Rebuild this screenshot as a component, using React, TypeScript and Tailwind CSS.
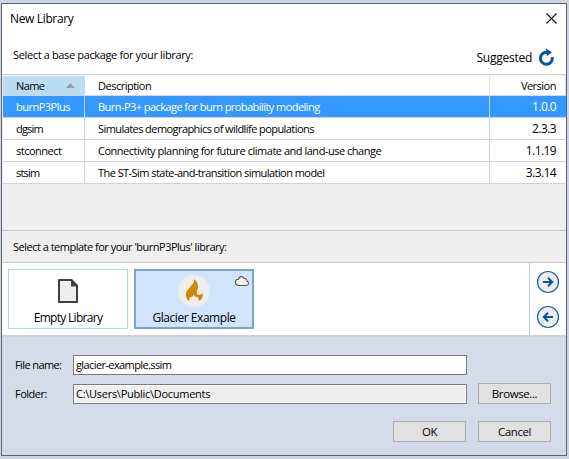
import type { ReactNode } from "react";

const packages = [
  { name: "burnP3Plus", nameCls: "tracking-[-0.5px]", description: "Burn-P3+ package for burn probability modeling", descCls: "tracking-[-0.55px]", version: "1.0.0", selected: true },
  { name: "dgsim", nameCls: "tracking-[-0.8px]", description: "Simulates demographics of wildlife populations", descCls: "tracking-[-0.57px]", version: "2.3.3" },
  { name: "stconnect", nameCls: "tracking-[-0.5px]", description: "Connectivity planning for future climate and land-use change", descCls: "tracking-[-0.48px]", version: "1.1.19" },
  { name: "stsim", nameCls: "tracking-[-0.8px]", description: "The ST-Sim state-and-transition simulation model", descCls: "tracking-[-0.55px]", version: "3.3.14" },
];

function DialogButton({ children }: { children: ReactNode }) {
  return (
    <button className="flex h-[21px] w-[73px] shrink-0 items-center justify-center border border-[#adadad] bg-[#e1e1e1] text-[11.5px] tracking-[-0.4px]">
      {children}
    </button>
  );
}

function ArrowButton({ back = false }: { back?: boolean }) {
  return (
    <svg width="24" height="24" viewBox="0 0 24 24" fill="none" className="shrink-0">
      <circle cx="12" cy="12" r="10.5" fill="#ededf0" stroke="#185ba2" strokeWidth="1.2" />
      <path
        d={back ? "M17 12H8M12 7.8 7.8 12 12 16.2" : "M7 12h9M12 7.8 16.2 12 12 16.2"}
        stroke="#0c529c"
        strokeWidth="2"
      />
    </svg>
  );
}

export default function App() {
  return (
    <div className="h-[459px] w-[569px] bg-[#cdd5e5] pt-[3px] pl-px font-['Open_Sans','Noto_Sans',sans-serif] text-[11px] leading-4 text-black">
      <div className="flex h-[453px] w-[566px] flex-col border border-[#5c6370] bg-white">
        <div className="flex h-[30px] items-start justify-between pt-[7px] pr-[9px] pl-[8px]">
          <span className="text-[12px] tracking-[-0.35px]">New Library</span>
          <svg width="11" height="11" viewBox="0 0 11 11" className="mt-[2px]" stroke="#111" strokeWidth="1.1">
            <path d="M.5.5l10 10M10.5.5l-10 10" />
          </svg>
        </div>
        <div className="flex h-[40px] items-start justify-between pr-[11px] pl-[11px]">
          <span className="mt-[13px] tracking-[-0.36px]">Select a base package for your library:</span>
          <div className="mt-[14px] flex items-center gap-[6px]">
            <span className="text-[12px] tracking-[-0.25px]">Suggested</span>
            <svg width="17" height="19" viewBox="0 0 17 19" fill="none">
              <path d="M9 4.3A6 6 0 1 0 14.200 9" stroke="#09569f" strokeWidth="3" />
              <path d="M8 .5l6 3.800-5.200 4z" fill="#09569f" />
            </svg>
          </div>
        </div>
        <div className="h-[2px] shrink-0 border-t border-[#d0d0d0] bg-[#f2f2f2]" />

        <div className="flex h-[154px] shrink-0 flex-col bg-[#efefef] pl-px">
          <div className="flex h-[20px] w-[563px] shrink-0 border-b border-[#d0d6e4] bg-white">
            <div className="flex w-[82px] items-center justify-between bg-[#bcdcf4] pr-[10px] pl-[13px]">
              <span className="tracking-[-0.6px]">Name</span>
              <svg width="9" height="5" viewBox="0 0 9 5" fill="#9c9c9c"><path d="M4.500 0 9 5H0z" /></svg>
            </div>
            <div className="flex flex-1 items-center border-r border-[#e0e0e0] pl-[13px] tracking-[-0.5px]">Description</div>
            <div className="flex w-[76px] items-center justify-end border-r border-[#e0e0e0] pr-[9px] tracking-[-0.5px]">Version</div>
          </div>
          {packages.map((p) => (
            <div
              key={p.name}
              className={`flex h-[22px] w-[563px] shrink-0 border-b border-[#cdd3e3] ${p.selected ? "bg-[#3399ff] text-white" : "bg-white"}`}
            >
              <div className={`flex w-[82px] items-center border-r border-[#cdd3e3] pl-[13px] ${p.nameCls}`}>{p.name}</div>
              <div className={`flex flex-1 items-center border-r border-[#cdd3e3] pl-[13px] ${p.descCls}`}>{p.description}</div>
              <div className="flex w-[76px] items-center justify-end pr-[10px] text-[12px] tracking-[-0.6px]">{p.version}</div>
            </div>
          ))}
        </div>

        <div className="flex h-[33px] shrink-0 items-center border-y border-[#cbcbcb] bg-[#efefef] pl-[11px] tracking-[-0.5px]">
          Select a template for your 'burnP3Plus' library:
        </div>

        <div className="flex h-[72px] shrink-0 bg-white pl-[6px]">
          <div className="flex flex-1 gap-[6px] pt-[6px]">
            <div className="flex h-[60px] w-[120px] flex-col items-center border border-[#b3d7fb]">
              <svg width="20" height="24" viewBox="0 0 20 24" className="mt-[9px]">
                <path d="M1 1h12.500L19 6.500V23H1z" fill="#efeff0" stroke="#404040" strokeWidth="2" strokeLinejoin="round" />
                <path d="M13 1v6.500h6z" fill="#404040" />
              </svg>
              <span className="mt-[7px] text-[12px] tracking-[-0.7px]">Empty Library</span>
            </div>
            <div className="relative flex h-[60px] w-[120px] flex-col items-center border-2 border-[#7da2ce] bg-[#d0e4fc]">
              <svg width="32" height="32" viewBox="0 0 32 32" className="mt-[4px] shrink-0">
                <circle cx="16" cy="16" r="16" fill="#ededed" />
                <path d="M16 4C17.500 10 8 13 7.800 19.500 7.700 22.500 9 25 11.500 26 10.800 24 11.500 22.300 13.200 21.500 13.500 22.500 14.500 22 15.800 19.500 16.500 22 17.500 22.500 18.500 21.500 20.500 22.300 21 24 20.500 26 24 24.800 25.500 21.500 24.300 18.200 23.200 19.500 21.500 20 19.500 19.500 17.500 17.500 20.800 14.500 19.700 9.500 19.200 7 18 5.500 16 4z" fill="#d58506" />
              </svg>
              <svg width="16" height="12" viewBox="0 0 16 12" className="absolute top-[4px] right-[2px]">
                <path d="M4 10.500h8.500a2.200 2.200 0 0 0 .5-4.300C13.200 4 11.500 3 10 3.400 9 1 5 .8 4.500 4.300 1 4 0 9.500 4 10.500z" fill="#f3f3f3" stroke="white" strokeWidth="2" />
                <path d="M4 10.500h8.500a2.200 2.200 0 0 0 .5-4.300C13.200 4 11.500 3 10 3.400 9 1 5 .8 4.500 4.300 1 4 0 9.500 4 10.500z" fill="#f3f3f3" stroke="#4d4d4d" strokeWidth="1.1" />
              </svg>
              <span className="mt-[3px] text-[12px] tracking-[-0.45px]">Glacier Example</span>
            </div>
          </div>
          <div className="flex w-[37px] flex-col items-center gap-[11px] border-l border-[#b5d4f2] pt-[7px]">
            <ArrowButton />
            <ArrowButton back />
          </div>
        </div>

        <div className="flex flex-1 flex-col border-t-2 border-[#d0d0d0] bg-[#d6dbe9] pt-[18px] pr-[15px] pl-[13px]">
          <div className="flex h-[20px] items-center">
            <label className="w-[58px] tracking-[-0.6px]">File name:</label>
            <div className="flex h-[20px] w-[394px] items-center border border-[#7a7a7a] bg-white pl-[2px] tracking-[-0.6px]">glacier-example.ssim</div>
          </div>
          <div className="mt-[8px] flex h-[21px] items-center">
            <label className="w-[58px] tracking-[-0.5px]">Folder:</label>
            <div className="mt-px flex h-[20px] w-[394px] items-center border border-[#7a7a7a] bg-[#efefef] pl-[2px] tracking-[-0.27px] shadow-[inset_0_0_0_1px_#fff]">C:\Users\Public\Documents</div>
            <div className="ml-[11px]"><DialogButton>Browse...</DialogButton></div>
          </div>
          <div className="mt-[17px] flex justify-end gap-[12px]">
            <DialogButton>OK</DialogButton>
            <DialogButton>Cancel</DialogButton>
          </div>
        </div>
      </div>
    </div>
  );
}
